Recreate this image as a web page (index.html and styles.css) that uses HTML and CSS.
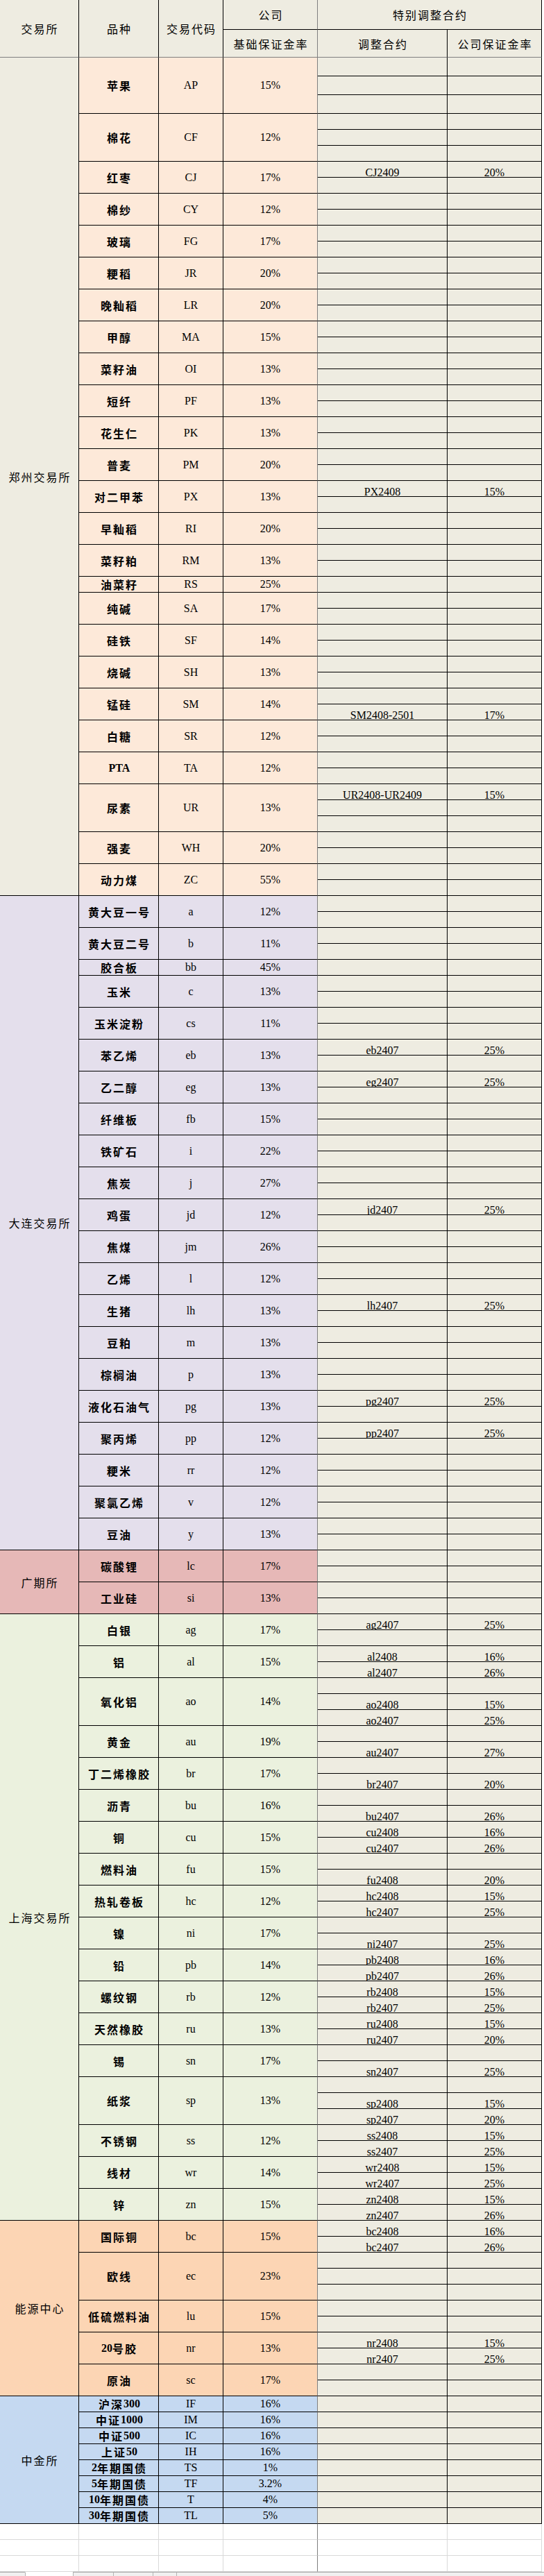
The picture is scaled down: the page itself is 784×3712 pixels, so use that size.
FILE: index.html
```html
<!DOCTYPE html>
<html lang="zh-CN">
<head>
<meta charset="utf-8">
<title>期货保证金率</title>
<link rel="stylesheet" href="styles.css">
</head>
<body>
<div class="sheet">
<div class="hd tall">交易所</div>
<div class="hd tall">品种</div>
<div class="hd tall">交易代码</div>
<div class="hd fr">公司</div>
<div class="hd wide">特别调整合约</div>
<div class="hd low fr">基础保证金率</div>
<div class="hd low">调整合约</div>
<div class="hd low">公司保证金率</div>

<div class="ex zx s52">郑州交易所</div>
<div class="n zz r3">苹果</div><div class="c zz r3">AP</div><div class="p zz r3">15%</div>
<div class="k"></div><div class="q"></div><div class="k"></div><div class="q"></div><div class="k"></div><div class="q"></div>
<div class="n zz r3">棉花</div><div class="c zz r3">CF</div><div class="p zz r3">12%</div>
<div class="k"></div><div class="q"></div><div class="k"></div><div class="q"></div><div class="k"></div><div class="q"></div>
<div class="n zz r2">红枣</div><div class="c zz r2">CJ</div><div class="p zz r2">17%</div>
<div class="k">CJ2409</div><div class="q">20%</div><div class="k"></div><div class="q"></div>
<div class="n zz r2">棉纱</div><div class="c zz r2">CY</div><div class="p zz r2">12%</div>
<div class="k"></div><div class="q"></div><div class="k"></div><div class="q"></div>
<div class="n zz r2">玻璃</div><div class="c zz r2">FG</div><div class="p zz r2">17%</div>
<div class="k"></div><div class="q"></div><div class="k"></div><div class="q"></div>
<div class="n zz r2">粳稻</div><div class="c zz r2">JR</div><div class="p zz r2">20%</div>
<div class="k"></div><div class="q"></div><div class="k"></div><div class="q"></div>
<div class="n zz r2">晚籼稻</div><div class="c zz r2">LR</div><div class="p zz r2">20%</div>
<div class="k"></div><div class="q"></div><div class="k"></div><div class="q"></div>
<div class="n zz r2">甲醇</div><div class="c zz r2">MA</div><div class="p zz r2">15%</div>
<div class="k"></div><div class="q"></div><div class="k"></div><div class="q"></div>
<div class="n zz r2">菜籽油</div><div class="c zz r2">OI</div><div class="p zz r2">13%</div>
<div class="k"></div><div class="q"></div><div class="k"></div><div class="q"></div>
<div class="n zz r2">短纤</div><div class="c zz r2">PF</div><div class="p zz r2">13%</div>
<div class="k"></div><div class="q"></div><div class="k"></div><div class="q"></div>
<div class="n zz r2">花生仁</div><div class="c zz r2">PK</div><div class="p zz r2">13%</div>
<div class="k"></div><div class="q"></div><div class="k"></div><div class="q"></div>
<div class="n zz r2">普麦</div><div class="c zz r2">PM</div><div class="p zz r2">20%</div>
<div class="k"></div><div class="q"></div><div class="k"></div><div class="q"></div>
<div class="n zz r2">对二甲苯</div><div class="c zz r2">PX</div><div class="p zz r2">13%</div>
<div class="k">PX2408</div><div class="q">15%</div><div class="k"></div><div class="q"></div>
<div class="n zz r2">早籼稻</div><div class="c zz r2">RI</div><div class="p zz r2">20%</div>
<div class="k"></div><div class="q"></div><div class="k"></div><div class="q"></div>
<div class="n zz r2">菜籽粕</div><div class="c zz r2">RM</div><div class="p zz r2">13%</div>
<div class="k"></div><div class="q"></div><div class="k"></div><div class="q"></div>
<div class="n zz">油菜籽</div><div class="c zz">RS</div><div class="p zz">25%</div>
<div class="k"></div><div class="q"></div>
<div class="n zz r2">纯碱</div><div class="c zz r2">SA</div><div class="p zz r2">17%</div>
<div class="k"></div><div class="q"></div><div class="k"></div><div class="q"></div>
<div class="n zz r2">硅铁</div><div class="c zz r2">SF</div><div class="p zz r2">14%</div>
<div class="k"></div><div class="q"></div><div class="k"></div><div class="q"></div>
<div class="n zz r2">烧碱</div><div class="c zz r2">SH</div><div class="p zz r2">13%</div>
<div class="k"></div><div class="q"></div><div class="k"></div><div class="q"></div>
<div class="n zz r2">锰硅</div><div class="c zz r2">SM</div><div class="p zz r2">14%</div>
<div class="k"></div><div class="q"></div><div class="k">SM2408-2501</div><div class="q">17%</div>
<div class="n zz r2">白糖</div><div class="c zz r2">SR</div><div class="p zz r2">12%</div>
<div class="k"></div><div class="q"></div><div class="k"></div><div class="q"></div>
<div class="n zz r2"><span class="l">PTA</span></div><div class="c zz r2">TA</div><div class="p zz r2">12%</div>
<div class="k"></div><div class="q"></div><div class="k"></div><div class="q"></div>
<div class="n zz r3">尿素</div><div class="c zz r3">UR</div><div class="p zz r3">13%</div>
<div class="k">UR2408-UR2409</div><div class="q">15%</div><div class="k"></div><div class="q"></div><div class="k"></div><div class="q"></div>
<div class="n zz r2">强麦</div><div class="c zz r2">WH</div><div class="p zz r2">20%</div>
<div class="k"></div><div class="q"></div><div class="k"></div><div class="q"></div>
<div class="n zz r2">动力煤</div><div class="c zz r2">ZC</div><div class="p zz r2">55%</div>
<div class="k"></div><div class="q"></div><div class="k"></div><div class="q"></div>

<div class="ex dl s41">大连交易所</div>
<div class="n dl r2">黄大豆一号</div><div class="c dl r2">a</div><div class="p dl r2">12%</div>
<div class="k"></div><div class="q"></div><div class="k"></div><div class="q"></div>
<div class="n dl r2">黄大豆二号</div><div class="c dl r2">b</div><div class="p dl r2">11%</div>
<div class="k"></div><div class="q"></div><div class="k"></div><div class="q"></div>
<div class="n dl">胶合板</div><div class="c dl">bb</div><div class="p dl">45%</div>
<div class="k"></div><div class="q"></div>
<div class="n dl r2">玉米</div><div class="c dl r2">c</div><div class="p dl r2">13%</div>
<div class="k"></div><div class="q"></div><div class="k"></div><div class="q"></div>
<div class="n dl r2">玉米淀粉</div><div class="c dl r2">cs</div><div class="p dl r2">11%</div>
<div class="k"></div><div class="q"></div><div class="k"></div><div class="q"></div>
<div class="n dl r2">苯乙烯</div><div class="c dl r2">eb</div><div class="p dl r2">13%</div>
<div class="k">eb2407</div><div class="q">25%</div><div class="k"></div><div class="q"></div>
<div class="n dl r2">乙二醇</div><div class="c dl r2">eg</div><div class="p dl r2">13%</div>
<div class="k">eg2407</div><div class="q">25%</div><div class="k"></div><div class="q"></div>
<div class="n dl r2">纤维板</div><div class="c dl r2">fb</div><div class="p dl r2">15%</div>
<div class="k"></div><div class="q"></div><div class="k"></div><div class="q"></div>
<div class="n dl r2">铁矿石</div><div class="c dl r2">i</div><div class="p dl r2">22%</div>
<div class="k"></div><div class="q"></div><div class="k"></div><div class="q"></div>
<div class="n dl r2">焦炭</div><div class="c dl r2">j</div><div class="p dl r2">27%</div>
<div class="k"></div><div class="q"></div><div class="k"></div><div class="q"></div>
<div class="n dl r2">鸡蛋</div><div class="c dl r2">jd</div><div class="p dl r2">12%</div>
<div class="k">jd2407</div><div class="q">25%</div><div class="k"></div><div class="q"></div>
<div class="n dl r2">焦煤</div><div class="c dl r2">jm</div><div class="p dl r2">26%</div>
<div class="k"></div><div class="q"></div><div class="k"></div><div class="q"></div>
<div class="n dl r2">乙烯</div><div class="c dl r2">l</div><div class="p dl r2">12%</div>
<div class="k"></div><div class="q"></div><div class="k"></div><div class="q"></div>
<div class="n dl r2">生猪</div><div class="c dl r2">lh</div><div class="p dl r2">13%</div>
<div class="k">lh2407</div><div class="q">25%</div><div class="k"></div><div class="q"></div>
<div class="n dl r2">豆粕</div><div class="c dl r2">m</div><div class="p dl r2">13%</div>
<div class="k"></div><div class="q"></div><div class="k"></div><div class="q"></div>
<div class="n dl r2">棕榈油</div><div class="c dl r2">p</div><div class="p dl r2">13%</div>
<div class="k"></div><div class="q"></div><div class="k"></div><div class="q"></div>
<div class="n dl r2">液化石油气</div><div class="c dl r2">pg</div><div class="p dl r2">13%</div>
<div class="k">pg2407</div><div class="q">25%</div><div class="k"></div><div class="q"></div>
<div class="n dl r2">聚丙烯</div><div class="c dl r2">pp</div><div class="p dl r2">12%</div>
<div class="k">pp2407</div><div class="q">25%</div><div class="k"></div><div class="q"></div>
<div class="n dl r2">粳米</div><div class="c dl r2">rr</div><div class="p dl r2">12%</div>
<div class="k"></div><div class="q"></div><div class="k"></div><div class="q"></div>
<div class="n dl r2">聚氯乙烯</div><div class="c dl r2">v</div><div class="p dl r2">12%</div>
<div class="k"></div><div class="q"></div><div class="k"></div><div class="q"></div>
<div class="n dl r2">豆油</div><div class="c dl r2">y</div><div class="p dl r2">13%</div>
<div class="k"></div><div class="q"></div><div class="k"></div><div class="q"></div>

<div class="ex gf s4">广期所</div>
<div class="n gf r2">碳酸锂</div><div class="c gf r2">lc</div><div class="p gf r2">17%</div>
<div class="k"></div><div class="q"></div><div class="k"></div><div class="q"></div>
<div class="n gf r2">工业硅</div><div class="c gf r2">si</div><div class="p gf r2">13%</div>
<div class="k"></div><div class="q"></div><div class="k"></div><div class="q"></div>

<div class="ex sh s38">上海交易所</div>
<div class="n sh r2">白银</div><div class="c sh r2">ag</div><div class="p sh r2">17%</div>
<div class="k">ag2407</div><div class="q">25%</div><div class="k"></div><div class="q"></div>
<div class="n sh r2">铝</div><div class="c sh r2">al</div><div class="p sh r2">15%</div>
<div class="k">al2408</div><div class="q">16%</div><div class="k">al2407</div><div class="q">26%</div>
<div class="n sh r3">氧化铝</div><div class="c sh r3">ao</div><div class="p sh r3">14%</div>
<div class="k"></div><div class="q"></div><div class="k">ao2408</div><div class="q">15%</div><div class="k">ao2407</div><div class="q">25%</div>
<div class="n sh r2">黄金</div><div class="c sh r2">au</div><div class="p sh r2">19%</div>
<div class="k"></div><div class="q"></div><div class="k">au2407</div><div class="q">27%</div>
<div class="n sh r2">丁二烯橡胶</div><div class="c sh r2">br</div><div class="p sh r2">17%</div>
<div class="k"></div><div class="q"></div><div class="k">br2407</div><div class="q">20%</div>
<div class="n sh r2">沥青</div><div class="c sh r2">bu</div><div class="p sh r2">16%</div>
<div class="k"></div><div class="q"></div><div class="k">bu2407</div><div class="q">26%</div>
<div class="n sh r2">铜</div><div class="c sh r2">cu</div><div class="p sh r2">15%</div>
<div class="k">cu2408</div><div class="q">16%</div><div class="k">cu2407</div><div class="q">26%</div>
<div class="n sh r2">燃料油</div><div class="c sh r2">fu</div><div class="p sh r2">15%</div>
<div class="k"></div><div class="q"></div><div class="k">fu2408</div><div class="q">20%</div>
<div class="n sh r2">热轧卷板</div><div class="c sh r2">hc</div><div class="p sh r2">12%</div>
<div class="k">hc2408</div><div class="q">15%</div><div class="k">hc2407</div><div class="q">25%</div>
<div class="n sh r2">镍</div><div class="c sh r2">ni</div><div class="p sh r2">17%</div>
<div class="k"></div><div class="q"></div><div class="k">ni2407</div><div class="q">25%</div>
<div class="n sh r2">铅</div><div class="c sh r2">pb</div><div class="p sh r2">14%</div>
<div class="k">pb2408</div><div class="q">16%</div><div class="k">pb2407</div><div class="q">26%</div>
<div class="n sh r2">螺纹钢</div><div class="c sh r2">rb</div><div class="p sh r2">12%</div>
<div class="k">rb2408</div><div class="q">15%</div><div class="k">rb2407</div><div class="q">25%</div>
<div class="n sh r2">天然橡胶</div><div class="c sh r2">ru</div><div class="p sh r2">13%</div>
<div class="k">ru2408</div><div class="q">15%</div><div class="k">ru2407</div><div class="q">20%</div>
<div class="n sh r2">锡</div><div class="c sh r2">sn</div><div class="p sh r2">17%</div>
<div class="k"></div><div class="q"></div><div class="k">sn2407</div><div class="q">25%</div>
<div class="n sh r3">纸浆</div><div class="c sh r3">sp</div><div class="p sh r3">13%</div>
<div class="k"></div><div class="q"></div><div class="k">sp2408</div><div class="q">15%</div><div class="k">sp2407</div><div class="q">20%</div>
<div class="n sh r2">不锈钢</div><div class="c sh r2">ss</div><div class="p sh r2">12%</div>
<div class="k">ss2408</div><div class="q">15%</div><div class="k">ss2407</div><div class="q">25%</div>
<div class="n sh r2">线材</div><div class="c sh r2">wr</div><div class="p sh r2">14%</div>
<div class="k">wr2408</div><div class="q">15%</div><div class="k">wr2407</div><div class="q">25%</div>
<div class="n sh r2">锌</div><div class="c sh r2">zn</div><div class="p sh r2">15%</div>
<div class="k">zn2408</div><div class="q">15%</div><div class="k">zn2407</div><div class="q">26%</div>

<div class="ex ny s11">能源中心</div>
<div class="n ny r2">国际铜</div><div class="c ny r2">bc</div><div class="p ny r2">15%</div>
<div class="k">bc2408</div><div class="q">16%</div><div class="k">bc2407</div><div class="q">26%</div>
<div class="n ny r3">欧线</div><div class="c ny r3">ec</div><div class="p ny r3">23%</div>
<div class="k"></div><div class="q"></div><div class="k"></div><div class="q"></div><div class="k"></div><div class="q"></div>
<div class="n ny r2">低硫燃料油</div><div class="c ny r2">lu</div><div class="p ny r2">15%</div>
<div class="k"></div><div class="q"></div><div class="k"></div><div class="q"></div>
<div class="n ny r2"><span class="l">20</span>号胶</div><div class="c ny r2">nr</div><div class="p ny r2">13%</div>
<div class="k">nr2408</div><div class="q">15%</div><div class="k">nr2407</div><div class="q">25%</div>
<div class="n ny r2">原油</div><div class="c ny r2">sc</div><div class="p ny r2">17%</div>
<div class="k"></div><div class="q"></div><div class="k"></div><div class="q"></div>

<div class="ex zj s8">中金所</div>
<div class="n zj">沪深<span class="l">300</span></div><div class="c zj">IF</div><div class="p zj">16%</div>
<div class="k"></div><div class="q"></div>
<div class="n zj">中证<span class="l">1000</span></div><div class="c zj">IM</div><div class="p zj">16%</div>
<div class="k"></div><div class="q"></div>
<div class="n zj">中证<span class="l">500</span></div><div class="c zj">IC</div><div class="p zj">16%</div>
<div class="k"></div><div class="q"></div>
<div class="n zj">上证<span class="l">50</span></div><div class="c zj">IH</div><div class="p zj">16%</div>
<div class="k"></div><div class="q"></div>
<div class="n zj"><span class="l">2</span>年期国债</div><div class="c zj">TS</div><div class="p zj">1%</div>
<div class="k"></div><div class="q"></div>
<div class="n zj"><span class="l">5</span>年期国债</div><div class="c zj">TF</div><div class="p zj">3.2%</div>
<div class="k"></div><div class="q"></div>
<div class="n zj"><span class="l">10</span>年期国债</div><div class="c zj">T</div><div class="p zj">4%</div>
<div class="k"></div><div class="q"></div>
<div class="n zj"><span class="l">30</span>年期国债</div><div class="c zj">TL</div><div class="p zj">5%</div>
<div class="k"></div><div class="q"></div>
</div>

<div class="blank">
<div></div><div></div><div></div><div class="fr"></div><div></div><div></div>
<div></div><div></div><div></div><div class="fr"></div><div></div><div></div>
<div></div><div></div><div></div><div class="fr"></div><div></div><div></div>
</div>

<div class="tabs">
<div class="tab t1"></div>
<div class="tab t2 on"></div>
<div class="tab t3"></div>
<div class="tab t4"></div>
<div class="tab t5"></div>
<div class="tab rest"></div>
</div>
</body>
</html>
```

FILE: styles.css
```css
* {
  box-sizing: border-box;
}

body {
  margin: 0;
  background: #ffffff;
}

.sheet,
.blank {
  display: grid;
  grid-template-columns: 114px 115px 93px 136px 187px 136px;
  width: 781px;
}

.sheet {
  grid-template-rows: 43px 40px 27px 27px 27px;
  grid-auto-rows: 23px;
}

.sheet > div {
  display: flex;
  align-items: center;
  justify-content: center;
  border-right: 1px solid #000;
  border-bottom: 1px solid #000;
  white-space: nowrap;
  color: #000;
}

.hd,
.ex,
.n {
  font-family: "Noto Sans CJK SC", sans-serif;
  font-size: 16px;
  letter-spacing: 2px;
  padding-left: 2px;
  line-height: 20px;
}

.hd {
  background: #eeece1;
}

.tall {
  grid-row: span 2;
}

.wide {
  grid-column: span 2;
}

.sheet > .tall,
.sheet > .low {
  border-bottom-color: #7f7f7f;
}

.sheet > .fr,
.sheet > .p {
  border-right-color: #7f7f7f;
}

.n {
  font-weight: 700;
}

.l {
  font-family: "Liberation Serif", "Noto Sans CJK SC", serif;
  letter-spacing: 0;
}

.c,
.p,
.k,
.q {
  font-family: "Liberation Serif", serif;
  font-size: 16px;
  line-height: 16px;
  color: #1a1a1a;
}

.sheet > .k,
.sheet > .q {
  background: #eeece1;
  align-items: flex-end;
  line-height: 12px;
}

.r2 { grid-row: span 2; }
.r3 { grid-row: span 3; }
.s52 { grid-row: span 52; }
.s41 { grid-row: span 41; }
.s4 { grid-row: span 4; }
.s38 { grid-row: span 38; }
.s11 { grid-row: span 11; }
.s8 { grid-row: span 8; }

.zx { background: #eeece1; }
.zz { background: #fde9d9; }
.dl { background: #e4dfec; }
.gf { background: #e6b8b7; }
.sh { background: #ebf1de; }
.ny { background: #fcd5b4; }
.zj { background: #c5d9f1; }

.blank {
  grid-auto-rows: 23px;
}

.blank > div {
  border-right: 1px solid #d9d9d9;
  border-bottom: 1px solid #d9d9d9;
}

.blank > .fr {
  border-right-color: #7f7f7f;
}

.tabs {
  display: flex;
  height: 6px;
  background: #f0f0f0;
}

.tab {
  border-top: 1px solid #a6a6a6;
  border-left: 1px solid #b4b4b4;
}

.t1 { width: 36px; border-left: none; }
.t2 { width: 69px; }
.t3 { width: 58px; }
.t4 { width: 57px; }
.t5 { width: 34px; }
.rest { flex: 1; }

.tab.on {
  background: #ffffff;
  border-top-color: #ffffff;
}
```
